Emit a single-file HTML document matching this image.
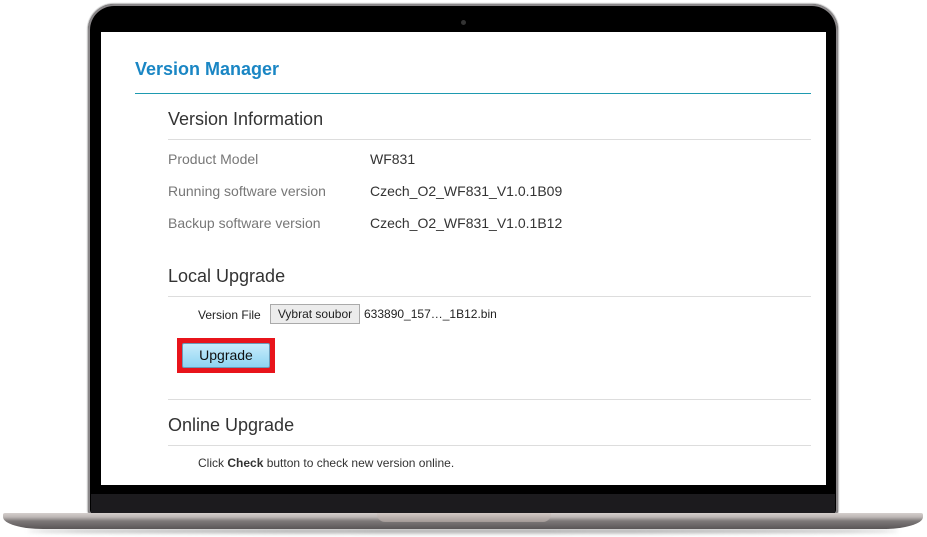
<!DOCTYPE html>
<html><head><style>
body{margin:0;width:927px;height:537px;background:#fff;position:relative;overflow:hidden;font-family:"Liberation Sans",Arial,sans-serif}
.lid{position:absolute;left:88px;top:4px;width:750px;height:512px;background:#000;border-radius:26px 26px 6px 6px;box-shadow:0 0 0 2px #8a8789 inset, 0 0 1px 1px #bbb}
.chin{position:absolute;left:91px;top:494px;width:744px;height:20px;background:#1c1b1e}
.cam{position:absolute;left:461px;top:20px;width:5px;height:5px;border-radius:50%;background:#333}
.scr{position:absolute;left:101px;top:32px;width:725px;height:453px;background:#fff;overflow:hidden}
.base{position:absolute;left:3px;top:513px;width:920px;height:16px;background:linear-gradient(#d5cfcd 0,#bdb7b5 25%,#7d7878 50%,#5a5657 100%);border-radius:2px 2px 40px 40px/2px 2px 12px 12px}
.notch{position:absolute;left:377px;top:513px;width:174px;height:9px;background:linear-gradient(#d2c9c5,#a39a97);border-radius:0 0 8px 8px}
.shadow{position:absolute;left:28px;top:529px;width:870px;height:4px;background:#999;border-radius:50%;filter:blur(2px)}
.t{position:absolute;white-space:nowrap}
.h1{left:34px;top:27px;font-size:18px;font-weight:bold;color:#1a86c4}
.hr{position:absolute;height:1px;background:#ddd}
.h2{font-size:18px;color:#333;left:67px}
.lab{font-size:14px;color:#777;left:67px}
.val{font-size:14px;color:#333;left:269px}
</style></head><body>
<div class="shadow"></div>
<div class="lid"></div>
<div class="chin"></div>
<div class="cam"></div>
<div class="scr">
<div class="t h1">Version Manager</div>
<div class="hr" style="left:34px;top:61px;width:676px;background:#1e9ab0"></div>
<div class="t h2" style="top:77px">Version Information</div>
<div class="hr" style="left:67px;top:107px;width:643px"></div>
<div class="t lab" style="top:119px">Product Model</div><div class="t val" style="top:119px">WF831</div>
<div class="t lab" style="top:151px">Running software version</div><div class="t val" style="top:151px">Czech_O2_WF831_V1.0.1B09</div>
<div class="t lab" style="top:183px">Backup software version</div><div class="t val" style="top:183px">Czech_O2_WF831_V1.0.1B12</div>
<div class="t h2" style="top:234px">Local Upgrade</div>
<div class="hr" style="left:67px;top:264px;width:643px"></div>
<div class="t" style="left:97px;top:276px;font-size:12px;color:#222">Version File</div>
<div class="t" style="left:169px;top:272px;width:88px;height:18px;border:1px solid #aaa;background:#ececec;font-size:12px;color:#222;text-align:center;line-height:18px">Vybrat soubor</div>
<div class="t" style="left:263px;top:275px;font-size:12px;color:#222">633890_157…_1B12.bin</div>
<div class="t" style="left:76px;top:306px;width:98px;height:35px;background:#e8141b"></div>
<div class="t" style="left:81px;top:311px;width:86px;height:23px;border:1px solid #6a9bb8;border-radius:2px;background:linear-gradient(#c8ecfb,#8ed4f2);font-size:14px;color:#111;text-align:center;line-height:23px">Upgrade</div>
<div class="hr" style="left:67px;top:367px;width:643px"></div>
<div class="t h2" style="top:383px">Online Upgrade</div>
<div class="hr" style="left:67px;top:413px;width:643px"></div>
<div class="t" style="left:97px;top:424px;font-size:12px;color:#333">Click <b>Check</b> button to check new version online.</div>
</div>
<div class="base"></div>
<div class="notch"></div>
</body></html>
